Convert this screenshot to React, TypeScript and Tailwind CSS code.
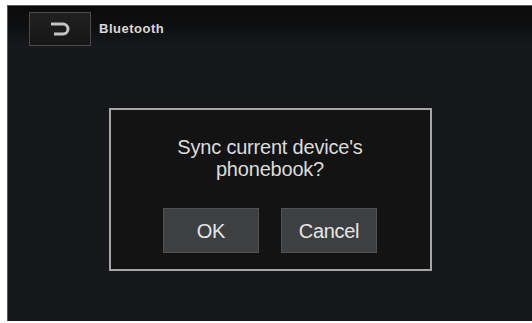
import React from "react";

const BackIcon = () => (
  <svg width="24" height="16" viewBox="0 0 24 16" fill="none">
    <path
      d="M3 3 H15 A5 5 0 0 1 15 13 H6"
      stroke="#c4c4c4"
      strokeWidth="3"
      strokeLinecap="butt"
    />
  </svg>
);

const DialogButton = ({ label }: { label: string }) => (
  <button className="w-[96px] h-[45px] bg-[#3d3f41] border border-[#505254] text-[#e6e6e6] text-[20px] tracking-[-0.3px] flex items-center justify-center">
    {label}
  </button>
);

const App = () => {
  return (
    <div
      className="w-[532px] h-[323px] bg-white pl-[7px] pt-[5px] pb-[2px] flex"
      style={{ fontFamily: '"Liberation Sans", Arial, sans-serif' }}
    >
      <div className="flex-1 flex flex-col bg-[#15171b] border-t border-l border-[#5a5a5a]">
        <div className="h-[42px] shrink-0 flex items-center gap-2 pl-[21px] bg-gradient-to-b from-[#0b0b0c] via-[#0e0f10] to-[#17191c]">
          <div className="w-[62px] h-[34px] mt-[4px] border border-[#4b4b4b] bg-gradient-to-b from-[#202020] to-[#161616] flex items-center justify-center">
            <BackIcon />
          </div>
          <span className="mt-[4px] text-[13px] font-bold text-[#d8d8d8] tracking-[0.5px]">Bluetooth</span>
        </div>
        <div className="flex-1 flex justify-center pt-[60px]">
          <div className="w-[323px] h-[163px] border-2 border-[#a6a6a6] bg-[#131313] flex flex-col items-center">
            <div className="mt-[26px] text-[20px] leading-[22px] tracking-[-0.2px] text-[#dcdcdc] text-center">
              Sync current device's
              <br />
              phonebook?
            </div>
            <div className="mt-[28px] flex gap-[22px]">
              <DialogButton label="OK" />
              <DialogButton label="Cancel" />
            </div>
          </div>
        </div>
      </div>
    </div>
  );
};

export default App;
